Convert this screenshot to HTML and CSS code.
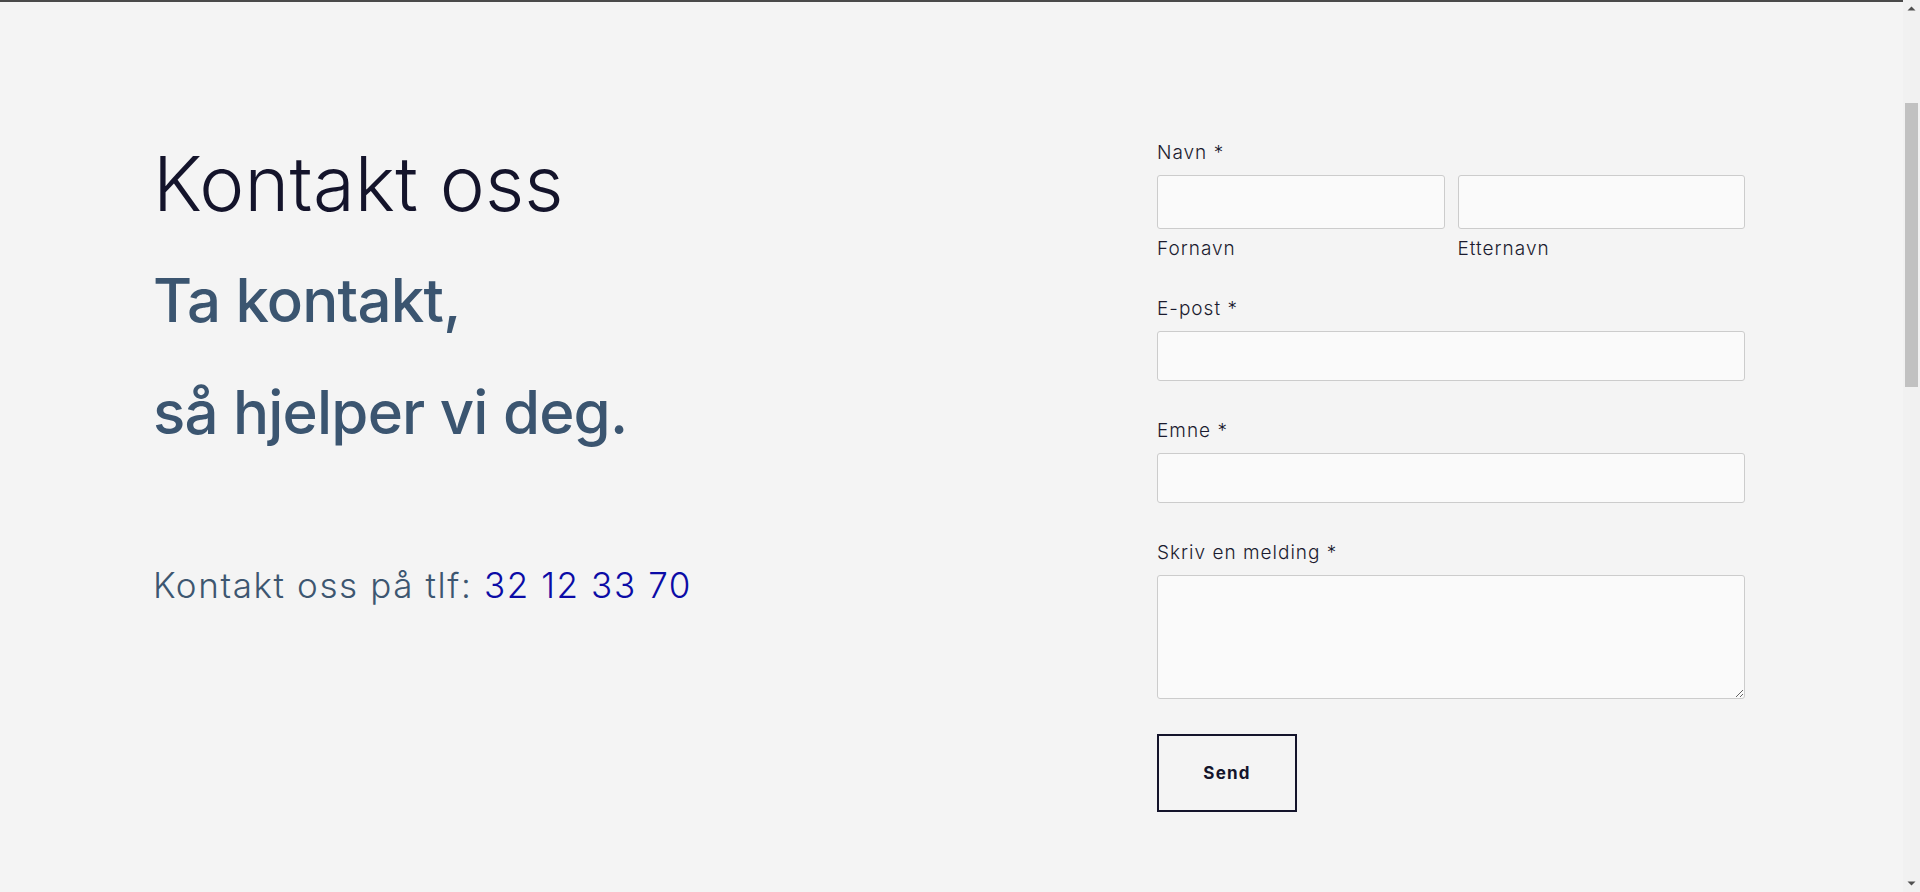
FILE: index.html
```html
<!DOCTYPE html>
<html lang="no">
<head>
<meta charset="utf-8">
<title>Kontakt oss</title>
<link rel="stylesheet" href="styles.css">
</head>
<body>
<main class="contact">
  <section class="intro">
    <h1 class="title">Kontakt oss</h1>
    <h2 class="tagline">Ta kontakt,<br>så hjelper vi deg.</h2>
    <p class="phone">Kontakt oss på tlf: <a href="#" class="phone-link">32 12 33 70</a></p>
  </section>
  <form class="form">
    <div class="field field-name">
      <label class="label">Navn *</label>
      <div class="name-row">
        <div class="name-col">
          <input class="input input-tall" type="text">
          <span class="sublabel">Fornavn</span>
        </div>
        <div class="name-col">
          <input class="input input-tall" type="text">
          <span class="sublabel">Etternavn</span>
        </div>
      </div>
    </div>
    <div class="field">
      <label class="label">E-post *</label>
      <input class="input" type="email">
    </div>
    <div class="field">
      <label class="label">Emne *</label>
      <input class="input" type="text">
    </div>
    <div class="field">
      <label class="label">Skriv en melding *</label>
      <textarea class="textarea"></textarea>
    </div>
    <button class="send" type="button">Send</button>
  </form>
</main>
<div class="scrollbar" aria-hidden="true">
  <svg class="sb-arrow sb-up" width="17" height="17" viewBox="0 0 17 17"><path d="M4.5 10.5 L8.5 6.5 L12.5 10.5 Z" fill="#505050"/></svg>
  <div class="sb-thumb"></div>
  <svg class="sb-arrow sb-down" width="17" height="17" viewBox="0 0 17 17"><path d="M4.5 6.5 L8.5 10.5 L12.5 6.5 Z" fill="#505050"/></svg>
</div>
</body>
</html>
```
FILE: styles.css
```css
html {
  background: #f4f4f4;
}
body {
  margin: 0;
  min-height: 892px;
  background: #f4f4f4;
  font-family: "Inter", "Liberation Sans", sans-serif;
  color: #14142b;
  border-top: 2px solid #4a4a4a;
  box-sizing: border-box;
}
.contact {
  display: flex;
  justify-content: space-between;
  padding: 137px 175px 80px 153px;
}
.intro {
  flex: 1;
}
.title {
  margin: 0;
  font-size: 76px;
  line-height: 89px;
  font-weight: 300;
  color: #14142b;
  letter-spacing: 0.2px;
}
.tagline {
  margin: 16px 0 0;
  font-size: 60px;
  line-height: 112px;
  font-weight: 500;
  color: #3b5570;
  letter-spacing: -0.8px;
}
.phone {
  margin: 92px 0 0;
  font-size: 35px;
  line-height: 50px;
  font-weight: 300;
  color: #3d5670;
  letter-spacing: 1.6px;
}
.phone-link {
  color: #0b0ba6;
  text-decoration: none;
}
.form {
  width: 588px;
  display: flex;
  flex-direction: column;
}
.field {
  display: flex;
  flex-direction: column;
  margin-bottom: 36px;
}
.field-name {
  margin-bottom: 32px;
}
.label,
.sublabel {
  font-size: 19px;
  line-height: 28px;
  font-weight: 300;
  color: #1b1b2f;
  letter-spacing: 1px;
}
.label {
  margin-bottom: 8px;
}
.sublabel {
  margin-top: 6px;
}
.name-row {
  display: flex;
  gap: 13px;
}
.name-col {
  flex: 1;
  display: flex;
  flex-direction: column;
}
.input,
.textarea {
  box-sizing: border-box;
  width: 100%;
  height: 50px;
  margin: 0;
  border: 1px solid #cccccc;
  border-radius: 3px;
  background: #fafafa;
  font: inherit;
}
.input-tall {
  height: 54px;
}
.textarea {
  height: 124px;
  display: block;
}
.send {
  width: 140px;
  height: 78px;
  margin-top: -1px;
  border: 2px solid #14142b;
  background: transparent;
  font-family: "Inter", "Liberation Sans", sans-serif;
  font-size: 17px;
  font-weight: 700;
  color: #14142b;
  letter-spacing: 1.2px;
  cursor: pointer;
}
.scrollbar {
  position: fixed;
  top: 0;
  right: 0;
  width: 17px;
  height: 100vh;
  background: #f1f1f1;
}
.sb-arrow {
  position: absolute;
  left: 0;
  display: block;
}
.sb-up {
  top: 0;
}
.sb-down {
  bottom: 0;
}
.sb-thumb {
  position: absolute;
  top: 103px;
  left: 2px;
  right: 2px;
  height: 284px;
  background: #c1c1c1;
}
```
